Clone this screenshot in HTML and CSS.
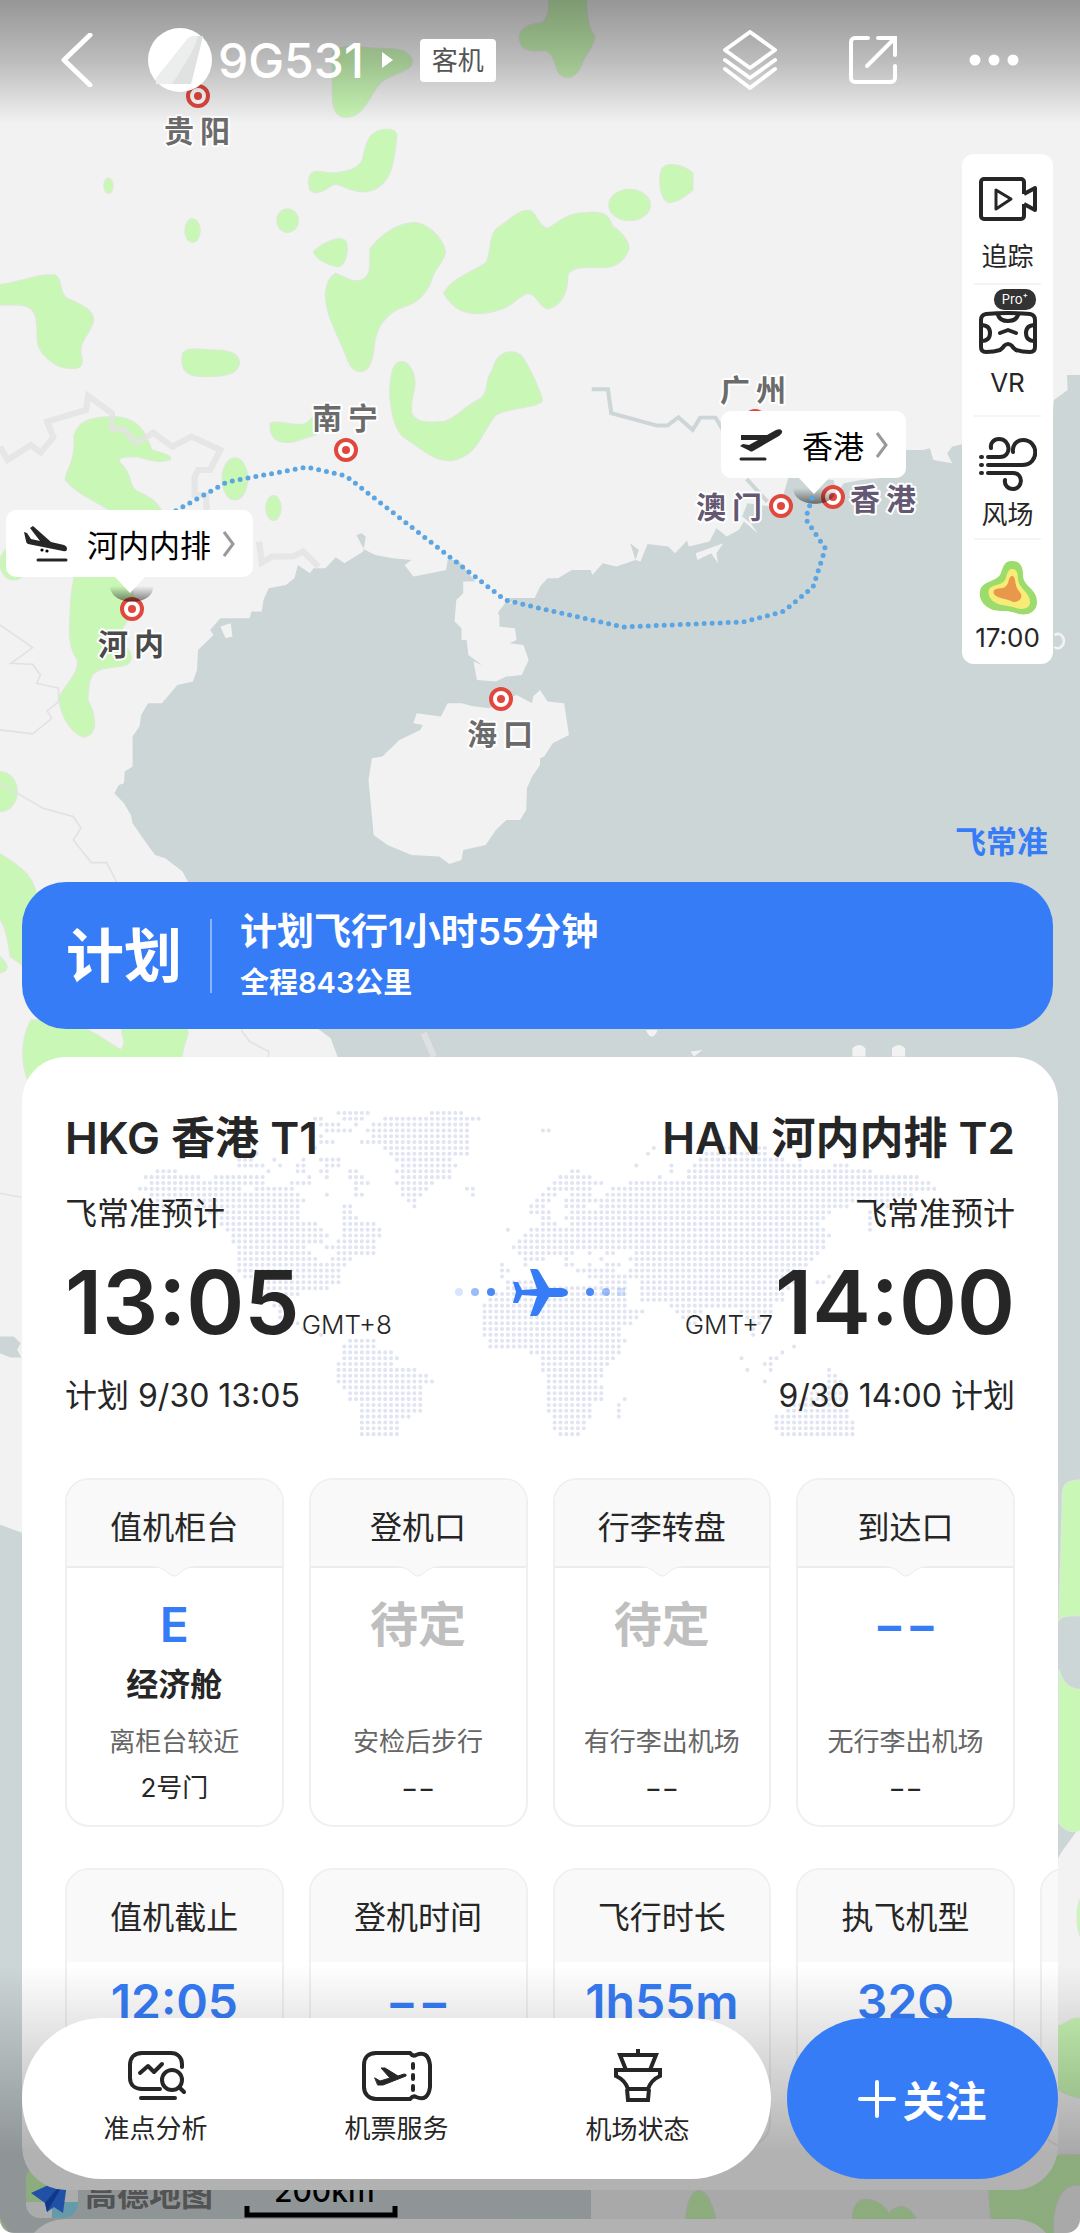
FILE: index.html
```html
<!DOCTYPE html>
<html lang="zh-CN">

<head>
  <meta charset="UTF-8">
  <meta name="viewport" content="width=device-width, initial-scale=1.0">
  <title>9G531 航班动态</title>
  <link rel="stylesheet" href="styles.css">
</head>

<body>
  <div class="screen">

    <!-- Map background -->
    <svg class="map" viewBox="0 0 1080 2233" preserveAspectRatio="xMinYMin slice" aria-hidden="true">
      <defs>
        <g id="city">
          <circle r="10" fill="#fff" stroke="#e0483e" stroke-width="4" />
          <circle r="4" fill="#e0483e" />
        </g>
        <linearGradient id="shade" x2="0" y2="1">
          <stop offset="0" stop-color="#000" stop-opacity="0" />
          <stop offset="1" stop-color="#000" stop-opacity=".5" />
        </linearGradient>
      </defs>
      <rect class="land" width="1080" height="2233" />
      <g transform="scale(.3444 .3333)">
        <!-- sea -->
        <path class="sea" d="M3136 1125L3098 1125L3100 1170L3060 1200L3050 1333L2793 1333L2765 1340L2750 1360L2765 1390L2710 1380L2700 1345L2680 1350L2630 1350L2600 1430L2500 1440L2450 1450L2430 1480L2420 1440L2290 1430L2270 1500L2240 1520L2170 1510L2155 1550L2180 1570L2200 1600L2160 1565L2145 1590L2110 1610L2080 1585L2060 1625L2000 1640L1995 1622L1960 1660L1940 1640L1880 1632L1860 1685L1845 1680L1855 1650L1830 1630L1845 1680L1790 1700L1750 1690L1720 1725L1715 1710L1660 1710L1620 1735L1590 1735L1568 1760L1550 1800L1510 1795L1450 1830L1450 1880L1495 1885L1500 1920L1480 1930L1520 1935L1535 1980L1515 2025L1470 2030L1440 2045L1385 2040L1375 1985L1400 1995L1360 1965L1355 1920L1340 1920L1340 1885L1320 1865L1325 1800L1345 1780L1345 1745L1380 1745L1330 1680L1300 1680L1295 1710L1250 1720L1200 1730L1175 1695L1195 1680L1140 1675L1090 1665L1060 1650L1050 1635L1035 1605L1050 1600L1062 1610L1055 1655L1000 1690L975 1672L945 1705L910 1705L900 1720L865 1695L855 1735L830 1755L780 1765L765 1800L760 1835L730 1835L725 1855L640 1855L610 1890L620 1905L575 1950L572 2010L560 2045L515 2055L470 2110L430 2110L410 2145L405 2180L385 2210L385 2300L362 2315L360 2350L345 2355L332 2380L360 2410L380 2445L385 2470L415 2515L450 2565L480 2575L530 2615L546 2646L928 3090L960 3115L980 3170V4600L120 4620L40 4590L0 4575V6699H1716V6560L1716 5600L3060 5600L3080 5560L3136 5480Z" />
        <path class="sea" d="M0 4010H40L60 4030L50 4050L62 4073H30L0 4060Z" />
        <!-- islands -->
        <path class="land" d="M1210 2140L1280 2150L1300 2110L1340 2110L1370 2118L1420 2125L1500 2085L1545 2110L1548 2090L1568 2070L1590 2105L1638 2110L1652 2205L1605 2230L1580 2270L1568 2275V2295L1545 2330L1530 2365L1528 2430L1510 2460L1470 2460L1440 2490L1410 2535L1345 2550L1340 2580L1305 2592L1275 2570L1195 2565L1125 2535L1085 2505L1070 2340L1080 2275L1110 2270L1160 2220L1220 2190L1228 2175L1200 2170Z" />
        <path class="land" d="M640 1880l30-10 5 40-20 5zM2020 1660l80-30-20 30 5 30-20-30-40 20zM1875 3090q18 40 35 0zM2475 3170v-25q20-20 38 0v25zM2590 3170v-25q20-20 38 0v25zM2005 3155l35-5-25 20z" />
        <path class="atoll" d="M3062 1905c20-10 30 10 26 25s-20 20-26 10" />
        <!-- woods -->
        <g class="woods">
          <path d="M965 160C1000 120 1060 150 1120 145C1200 145 1210 190 1185 205C1150 225 1110 235 1095 260C1070 300 1050 350 1010 352C960 355 965 300 965 250Z" />
          <path d="M1075 410C1100 380 1155 380 1152 410C1145 480 1140 560 1065 575C1020 580 990 550 970 552C950 565 920 590 900 570C890 530 900 510 930 515C970 525 1040 515 1052 480C1060 450 1060 430 1075 410Z" />
          <ellipse cx="315" cy="557" rx="13" ry="23" />
          <ellipse cx="559" cy="692" rx="22" ry="35" />
          <ellipse cx="835" cy="662" rx="31" ry="35" />
          <path d="M910 755C930 735 985 700 1005 725C1015 755 1000 795 985 800C960 800 920 780 910 755Z" />
          <path d="M975 820C1000 830 1020 850 1050 840C1085 825 1070 780 1075 745C1110 700 1160 665 1210 668C1260 680 1290 730 1293 755C1290 790 1260 800 1250 850C1230 890 1210 910 1160 925C1110 950 1090 990 1085 1050C1080 1090 1070 1115 1045 1115C1010 1110 1010 1070 985 1020C960 960 945 930 945 880C948 850 955 830 975 820Z" />
          <path d="M1288 880C1310 840 1350 825 1410 790C1430 760 1415 700 1450 680C1490 650 1520 620 1545 635C1560 650 1570 685 1590 685C1620 670 1640 640 1700 638C1770 630 1770 660 1780 680C1810 700 1830 730 1825 750C1810 790 1780 805 1740 803C1700 800 1650 800 1648 830C1650 880 1625 920 1590 927C1560 915 1560 880 1530 880C1500 890 1490 930 1400 940C1350 945 1320 930 1288 880Z" />
          <path d="M-10 855C60 850 100 820 160 825C185 840 170 880 195 895C240 915 270 930 272 960C265 1000 230 1020 235 1060C245 1100 235 1107 200 1105C160 1105 110 1060 108 1020C108 960 110 920 60 915L-10 915Z" />
          <path d="M530 1060C545 1040 570 1048 620 1050C680 1050 695 1070 695 1090C690 1120 660 1130 600 1130C550 1130 520 1120 530 1060Z" />
          <path d="M1140 1110C1150 1075 1185 1075 1200 1120C1215 1170 1190 1180 1195 1240C1210 1270 1240 1268 1290 1265C1330 1250 1350 1220 1380 1205C1430 1180 1400 1150 1430 1110C1445 1045 1500 1045 1520 1075C1550 1130 1560 1150 1575 1200C1570 1225 1480 1220 1440 1245C1400 1290 1390 1370 1310 1382C1260 1385 1230 1350 1170 1310C1140 1280 1120 1180 1140 1110Z" />
          <ellipse cx="1828" cy="615" rx="60" ry="47" />
          <path d="M1920 510C1930 485 1980 490 2012 520V570C1990 590 1960 610 1940 607C1915 595 1912 540 1920 510Z" />
          <path d="M1508 110C1515 75 1545 72 1575 68C1600 40 1590 20 1595 -10L1702 -10C1705 40 1705 80 1728 110C1720 150 1700 160 1690 190C1675 235 1640 245 1620 215C1605 170 1600 150 1575 152C1530 155 1510 150 1508 110Z" />
          <path d="M215 1310C225 1260 270 1250 330 1250C400 1250 425 1300 440 1350C470 1360 500 1365 495 1378C470 1390 440 1385 400 1370C370 1370 335 1370 350 1390C390 1430 370 1460 400 1475C440 1490 470 1520 480 1560L350 1560C310 1510 240 1500 190 1440C190 1410 220 1390 215 1310Z" />
          <ellipse cx="682" cy="1437" rx="37" ry="63" />
          <ellipse cx="794" cy="1524" rx="22" ry="37" />
          <path d="M785 1270C810 1255 850 1285 890 1270L920 1240C950 1270 930 1310 890 1312C840 1335 780 1340 785 1270Z" />
          <path d="M215 1730L380 1730C410 1850 340 1890 340 1920C400 1960 390 2000 340 2000C260 2010 260 2020 255 2100C275 2140 290 2200 245 2212C200 2200 170 2130 172 2090C200 2040 230 2020 225 1980C190 1930 205 1860 205 1800Z" />
          <ellipse cx="40" cy="1690" rx="40" ry="50" />
          <ellipse cx="0" cy="2375" rx="50" ry="60" />
          <path d="M-10 2555C60 2600 110 2630 110 2720C80 2780 60 2800 70 2900L30 2870C20 2800 10 2760 -10 2750ZM0 2870C30 2900 25 2910 0 2920ZM90 3060H200C260 3090 290 3110 350 3150C380 3120 330 3090 370 3080L540 3080C560 3110 520 3130 530 3200L80 3240C60 3180 60 3120 90 3060Z" />
          <path d="M3150 4440C3100 4440 3080 4450 3085 4500L3075 4860C3090 4840 3150 4850 3150 4850ZM3075 5010C3090 5060 3110 5070 3150 5070V5480C3120 5510 3090 5490 3075 5470Z" />
          <path d="M3150 5680C3120 5700 3120 5800 3150 5830ZM3060 6080C3100 6080 3110 6040 3150 6060V6300C3100 6280 3060 6290 3060 6220ZM2870 6560C2900 6480 3100 6450 3150 6470V6560C3090 6540 3050 6600 3060 6710H2880ZM1990 6670C1995 6540 2060 6540 2080 6670ZM2475 6670C2470 6560 2560 6600 2580 6640C2620 6600 2650 6630 2665 6670ZM-10 6640L30 6710H-10Z" />
        </g>
        <!-- roads and borders -->
        <path class="border" d="M0 1340L22 1380L90 1335L118 1358L155 1312L137 1265L250 1230L256 1188L325 1240V1288H360L395 1330L445 1298L500 1340L556 1310L640 1350L610 1410H575L565 1430V1485H598L600 1530M752 1625L760 1688L790 1670H850L880 1655L925 1700M1230 3100L1260 3170" />
        <path class="road" d="M0 1875L95 1943L32 1990L95 1993L117 2025L107 2050L170 2065V2105L137 2133L150 2155L95 2202L0 2190M0 2350L125 2425L213 2450L235 2485L213 2520L265 2588H310L340 2650M700 3090L725 3125L780 3155V3180M0 3580L62 3592" />
        <path class="river" d="M1718 1168H1765L1775 1240L1908 1277H1938L1970 1252L2011 1290L2033 1253H2078L2110 1310M2168 1437L2228 1505M1560 1800L1480 1800L1450 1845" />
      </g>

      <!-- cities -->
      <use href="#city" x="198" y="96" />
      <use href="#city" x="346" y="450" />
      <use href="#city" x="132" y="609" />
      <use href="#city" x="501" y="699" />
      <use href="#city" x="755" y="421" />
      <use href="#city" x="781" y="506" />
      <use href="#city" x="833" y="497" />
      <g class="city-name">
        <text x="164" y="142">贵阳</text>
        <text x="312" y="429">南宁</text>
        <text x="98" y="655" class="dark">河内</text>
        <text x="467" y="745">海口</text>
        <text x="720" y="401">广州</text>
        <text x="696" y="518" class="purple">澳门</text>
        <text x="850" y="510" class="purple">香港</text>
      </g>

      <!-- planned track -->
      <path d="M110 586h43c2 20-42 22-43 0z" fill="url(#shade)" />
      <path d="M793 488h43c2 20-42 22-43 0z" fill="url(#shade)" />
      <path class="track" d="M812 498L807 514V521L825 548L823 556L813 587L789 607L782 612L743 622L623 627L543 609L505 600L346 476L307 467L227 482L140 531" />

      <!-- map provider and scale -->
      <g>
        <rect x="26" y="2166" width="52" height="52" rx="14" fill="#f4f6f6" />
        <path d="M26 2202V2180a14 14 0 0 1 14-14h12v36z" fill="#c9f7b5" />
        <path d="M52 2202h26v2a14 14 0 0 1-14 14H52z" fill="#8fdcf2" />
        <path d="M31 2193l37-17-5 37-9-6-7 5-2-9z" fill="#2f74ee" />
        <path d="M68 2176l-21 36-2-9z" fill="#174fc4" />
      </g>
      <text class="provider" x="85" y="2206">高德地图</text>
      <text class="scale-text" x="274" y="2202">200km</text>
      <path d="M247 2206v9h148v-9" fill="none" stroke="#000" stroke-width="5" />
    </svg>

    <!-- Top bar -->
    <header class="topbar">
      <button class="icon-btn back" type="button" aria-label="返回">
        <svg width="32" height="54" viewBox="0 0 32 54"><path d="M29 2L3 27l26 25" fill="none" stroke="#fff" stroke-width="5" stroke-linecap="round" stroke-linejoin="round" /></svg>
      </button>
      <svg class="airline" width="64" height="64" viewBox="0 0 64 64" aria-hidden="true">
        <circle cx="32" cy="32" r="32" fill="#fff" />
        <path d="M8 50L40 10q2-2 6-2h9L43 56H8z" fill="#eceeee" />
        <path d="M24 56C34 40 46 24 50 8h5L43 56z" fill="#e0e1e1" />
      </svg>
      <h1 class="flight-no">9G531</h1>
      <svg class="caret" width="12" height="16" viewBox="0 0 12 16" aria-hidden="true"><path d="M0 0l11 8L0 16z" fill="#fff" /></svg>
      <span class="tag">客机</span>
      <div class="actions">
        <button class="icon-btn" type="button" aria-label="图层">
          <svg width="54" height="60" viewBox="0 0 54 60" fill="none" stroke="#fff" stroke-width="4" stroke-linejoin="round" stroke-linecap="round"><path d="M27 2L52 20 27 38 2 20zM2 30l25 18 25-18M2 39l25 19 25-19" /></svg>
        </button>
        <button class="icon-btn" type="button" aria-label="分享">
          <svg width="48" height="48" viewBox="0 0 48 48" fill="none" stroke="#fff" stroke-width="4" stroke-linecap="round"><path d="M19 2H6a4 4 0 0 0-4 4v36a4 4 0 0 0 4 4h36a4 4 0 0 0 4-4V30M29 2h17v17M45 3L18 30" /></svg>
        </button>
        <button class="icon-btn" type="button" aria-label="更多">
          <svg width="50" height="12" viewBox="0 0 50 12" fill="#fff"><circle cx="6" cy="6" r="5.5" /><circle cx="25" cy="6" r="5.5" /><circle cx="44" cy="6" r="5.5" /></svg>
        </button>
      </div>
    </header>

    <!-- Map controls -->
    <section class="map-area">
      <nav class="tools">
        <button class="tool tool-track" type="button">
          <svg width="58" height="44" viewBox="0 0 58 44" fill="none" stroke="#262626" stroke-width="4" stroke-linejoin="round"><path d="M45 17V5a3 3 0 0 0-3-3H5a3 3 0 0 0-3 3v34a3 3 0 0 0 3 3h37a3 3 0 0 0 3-3V27M45 17l11-6v22l-11-6" /><path d="M17 13v19l15-10z" stroke-width="3" /></svg>
          <span>追踪</span>
        </button>
        <button class="tool tool-vr" type="button">
          <span class="pro">Pro⁺</span>
          <svg width="60" height="44" viewBox="0 0 60 44" fill="none" stroke="#262626" stroke-width="4" stroke-linecap="round" stroke-linejoin="round"><path d="M8 3q22-2 44 0 5 1 5 6v27q0 5-5 5-8 0-14-2-3-2-4-4-4-4-8 0-1 2-4 4-6 2-14 2-5 0-5-5V9q0-5 5-6z" /><path d="M20 4q2 6 10 6t10-6M3 14q9 0 9 8t-9 8M57 14q-9 0-9 8t9 8M22 22l8-3 8 3" /></svg>
          <span>VR</span>
        </button>
        <button class="tool tool-wind" type="button">
          <svg width="58" height="54" viewBox="0 0 58 54" fill="none" stroke="#262626" stroke-width="4" stroke-linecap="round"><path d="M9 20h12c12 0 11-18-1-18-5 0-9 4-8 9M9 28h34c18 0 17-25 1-25-7 0-11 6-10 12M9 36h25c11 0 10 16 0 16-5 0-9-4-8-9" /><path d="M2 20h1M2 28h1M2 36h1" /></svg>
          <span>风场</span>
        </button>
        <button class="tool tool-radar" type="button">
          <svg width="58" height="56" viewBox="0 0 58 56"><path d="M33 1c9 0 11 7 11 14 0 12 14 13 14 27 0 10-9 14-18 12-6-2-10-3-18-3C9 51-1 42 1 31c2-10 15-9 20-16 3-6 3-14 12-14z" fill="#9bdc6c" /><path d="M33 9c5 0 6 5 6 10 0 9 13 14 12 24-1 6-8 7-14 5-8-3-14-2-20-5-8-4-9-12-6-15 4-4 11-2 15-8 2-4 2-11 7-11z" fill="#f6ec77" /><path d="M33 16c3 0 3 5 4 9 1 6 7 8 5 13-2 4-7 5-10 3-5-2-8-2-13-4s-6-6-2-8c4-1 8 0 11-4 2-3 2-9 5-9z" fill="#e8974b" /></svg>
          <span>17:00</span>
        </button>
      </nav>
      <strong class="brand">飞常准</strong>
      <button class="callout callout-hkg" type="button">
        <svg width="44" height="32" viewBox="0 0 44 32"><path d="M2 6h8l18 0 9-5q5-2 6 1 1 2-3 5L14 22q-2 1-3 0L1 17l3-2 6 1 9-5H2z" fill="#262626" /><path d="M2 30h24" stroke="#262626" stroke-width="3" stroke-linecap="round" /></svg>
        <span>香港</span>
        <svg width="12" height="26" viewBox="0 0 12 26" fill="none" stroke="#999" stroke-width="3"><path d="M1 1l9 12-9 12" /></svg>
      </button>
      <button class="callout callout-han" type="button">
        <svg width="44" height="36" viewBox="0 0 44 36"><path d="M0 6l3 1 4 6 9 2L6 2l3-2 18 16 13 3q3 1 3 4t-4 2L4 18Q2 17 2 15z" fill="#262626" /><path d="M14 34h28" stroke="#262626" stroke-width="3" stroke-linecap="round" /><circle cx="18" cy="24" r="1.6" /><circle cx="23" cy="25" r="1.6" /></svg>
        <span>河内内排</span>
        <svg width="12" height="26" viewBox="0 0 12 26" fill="none" stroke="#999" stroke-width="3"><path d="M1 1l9 12-9 12" /></svg>
      </button>
    </section>

    <!-- Flight status -->
    <section class="status">
      <strong class="status-name">计划</strong>
      <div class="status-info">
        <p class="status-time">计划飞行1小时55分钟</p>
        <p class="status-distance">全程843公里</p>
      </div>
    </section>

    <main class="card">
      <section class="route">
        <svg class="world" viewBox="-.5 -.5 138 56" aria-hidden="true">
          <path d="M34 0h6M48 0h0M50 0h6M30 1h2M35 1h4M42 1h17M28 2h0M31 2h4M37 2h1M40 2h17M88 2h0M32 3h5M39 3h18M69 3h2M74 3h0M31 4h1M40 4h17M71 4h0M73 4h0M28 5h0M31 5h3M38 5h19M71 5h0M21 6h0M23 6h0M30 6h1M42 6h15M88 6h1M99 6h3M106 6h2M118 6h0M20 7h1M43 7h14M72 7h0M87 7h1M97 7h11M17 8h3M23 8h1M26 8h0M28 8h1M31 8h4M44 8h10M86 8h0M92 8h0M96 8h15M113 8h1M17 9h5M24 9h1M27 9h2M32 9h3M45 9h10M85 9h1M91 9h1M95 9h19M119 9h3M3 10h4M22 10h1M27 10h2M31 10h2M36 10h2M44 10h10M74 10h2M91 10h1M94 10h32M1 11h10M13 11h9M24 11h0M27 11h0M29 11h1M32 11h1M36 11h3M45 11h9M72 11h6M89 11h1M92 11h0M94 11h40M2 12h20M24 12h0M26 12h4M32 12h0M37 12h3M44 12h7M71 12h9M82 12h0M84 12h52M0 13h18M20 13h7M29 13h0M31 13h0M37 13h1M40 13h0M45 13h5M56 13h2M70 13h8M81 13h56M2 14h26M30 14h0M32 14h1M37 14h2M45 14h4M57 14h1M69 14h3M74 14h4M80 14h53M3 15h26M38 15h0M46 15h2M68 15h3M73 15h56M3 16h3M10 16h18M35 16h2M47 16h1M67 16h3M73 16h4M79 16h43M126 16h3M12 17h16M35 17h2M40 17h0M67 17h4M74 17h45M125 17h2M14 18h14M35 18h3M40 18h0M63 18h0M69 18h2M73 18h45M125 18h1M14 19h17M35 19h6M63 19h0M69 19h3M74 19h43M125 19h1M15 20h17M35 20h7M61 20h0M63 20h1M67 20h51M125 20h1M16 21h17M35 21h7M61 21h0M66 21h53M16 22h16M34 22h7M43 22h0M65 22h53M120 22h0M17 23h12M32 23h9M43 23h0M64 23h54M17 24h13M34 24h7M65 24h10M77 24h1M80 24h2M85 24h32M17 25h14M33 25h4M66 25h4M73 25h1M76 25h0M79 25h1M84 25h32M120 25h0M17 26h19M62 26h1M66 26h1M70 26h0M73 26h2M77 26h1M80 26h3M85 26h30M17 27h18M62 27h2M71 27h0M75 27h7M84 27h30M119 27h0M18 28h17M62 28h1M73 28h0M77 28h37M118 28h1M20 29h15M63 29h5M79 29h5M86 29h27M116 29h2M21 30h12M63 30h21M86 30h26M21 31h7M33 31h0M61 31h23M86 31h25M23 32h3M33 32h0M60 32h24M86 32h25M23 33h3M59 33h25M91 33h18M24 34h2M59 34h28M92 34h5M103 34h6M24 35h3M59 35h27M93 35h3M104 35h4M26 36h2M59 36h26M94 36h2M105 36h2M111 36h0M28 37h1M59 37h24M94 37h1M105 37h1M31 38h1M59 38h24M95 38h0M105 38h1M32 39h0M36 39h5M60 39h24M95 39h0M103 39h0M35 40h6M60 40h23M96 40h0M103 40h0M112 40h1M35 41h9M62 41h0M64 41h0M67 41h16M102 41h0M104 41h0M110 41h1M35 42h10M69 42h13M103 42h1M108 42h2M34 43h10M69 43h12M104 43h0M107 43h2M111 43h0M114 43h0M34 44h14M69 44h11M104 44h1M108 44h1M111 44h0M116 44h0M118 44h1M34 45h16M70 45h10M105 45h0M111 45h0M118 45h2M34 46h17M70 46h9M107 46h1M118 46h3M35 47h14M70 47h10M117 47h4M36 48h13M70 48h10M115 48h7M36 49h13M70 49h10M83 49h1M114 49h8M38 50h11M70 50h8M82 50h1M112 50h9M38 51h11M70 51h8M82 51h1M111 51h11M38 52h9M71 52h7M82 52h1M109 52h13M38 53h7M71 53h6M82 53h0M109 53h14M38 54h7M71 54h6M109 54h14M38 55h7M72 55h4M110 55h13" />
        </svg>
        <div class="airport">
          <h2>HKG 香港 T1</h2>
          <p class="source">飞常准预计</p>
          <p class="clock"><time>13:05</time><small>GMT+8</small></p>
          <p class="plan">计划 9/30 13:05</p>
        </div>
        <svg class="plane" width="170" height="50" viewBox="0 0 170 50" aria-hidden="true">
          <g fill="#367cf6">
            <circle cx="4" cy="25" r="4" opacity=".2" />
            <circle cx="20" cy="25" r="4" opacity=".5" />
            <circle cx="36" cy="25" r="4" opacity=".9" />
            <path d="M58 15h5l4 8 15-1-7-20h6q2 0 3 2l10 17h13q6 1 6 4.500t-6 4.500H94L84 47q-1 2-3 2h-6l7-20-15-1-4 8h-5l3-11z" />
            <circle cx="135" cy="25" r="4" opacity=".9" />
            <circle cx="151" cy="25" r="4" opacity=".5" />
            <rect x="162" y="21" width="8" height="8" opacity=".2" />
          </g>
        </svg>
        <div class="airport arrive">
          <h2>HAN 河内内排 T2</h2>
          <p class="source">飞常准预计</p>
          <p class="clock"><small>GMT+7</small><time>14:00</time></p>
          <p class="plan">9/30 14:00 计划</p>
        </div>
      </section>

      <section class="tiles">
        <article class="tile">
          <h3>值机柜台</h3>
          <svg class="notch" width="40" height="12" viewBox="0 0 40 12"><path d="M0 0v1c12 0 14 9 20 9s8-9 20-9V0z" fill="#f9f9f9" /><path d="M0 1c12 0 14 9 20 9s8-9 20-9" fill="none" stroke="#ececec" /></svg>
          <p class="value">E</p>
          <p class="cabin">经济舱</p>
          <p class="hint">离柜台较近</p>
          <p class="detail">2号门</p>
        </article>
        <article class="tile">
          <h3>登机口</h3>
          <svg class="notch" width="40" height="12" viewBox="0 0 40 12"><path d="M0 0v1c12 0 14 9 20 9s8-9 20-9V0z" fill="#f9f9f9" /><path d="M0 1c12 0 14 9 20 9s8-9 20-9" fill="none" stroke="#ececec" /></svg>
          <p class="value pending">待定</p>
          <p class="cabin"></p>
          <p class="hint">安检后步行</p>
          <p class="detail">−−</p>
        </article>
        <article class="tile">
          <h3>行李转盘</h3>
          <svg class="notch" width="40" height="12" viewBox="0 0 40 12"><path d="M0 0v1c12 0 14 9 20 9s8-9 20-9V0z" fill="#f9f9f9" /><path d="M0 1c12 0 14 9 20 9s8-9 20-9" fill="none" stroke="#ececec" /></svg>
          <p class="value pending">待定</p>
          <p class="cabin"></p>
          <p class="hint">有行李出机场</p>
          <p class="detail">−−</p>
        </article>
        <article class="tile">
          <h3>到达口</h3>
          <svg class="notch" width="40" height="12" viewBox="0 0 40 12"><path d="M0 0v1c12 0 14 9 20 9s8-9 20-9V0z" fill="#f9f9f9" /><path d="M0 1c12 0 14 9 20 9s8-9 20-9" fill="none" stroke="#ececec" /></svg>
          <p class="value">−−</p>
          <p class="cabin"></p>
          <p class="hint">无行李出机场</p>
          <p class="detail">−−</p>
        </article>
      </section>

      <section class="tiles facts">
        <article class="tile">
          <h3>值机截止</h3>
          <p class="value">12:05</p>
        </article>
        <article class="tile">
          <h3>登机时间</h3>
          <p class="value">−−</p>
        </article>
        <article class="tile">
          <h3>飞行时长</h3>
          <p class="value">1h55m</p>
        </article>
        <article class="tile">
          <h3>执飞机型</h3>
          <p class="value">32Q</p>
        </article>
        <article class="tile">
          <h3></h3>
        </article>
      </section>
    </main>

    <section class="card next-card"></section>

    <!-- Bottom bar -->
    <footer class="bottom">
      <nav class="tabs">
        <button class="tab" type="button">
          <svg width="60" height="52" viewBox="0 0 60 52" fill="none" stroke="#262626" stroke-width="4" stroke-linecap="round" stroke-linejoin="round"><path d="M56 17v-3C56 7 51 3 45 3H16C8 3 4 8 4 15v13c0 7 5 11 12 11h18M14 23l8-7 6 6 8-8M15 48h34" /><circle cx="46" cy="30" r="10" /><path d="M54 38l4 4" /></svg>
          <span>准点分析</span>
        </button>
        <button class="tab" type="button">
          <svg width="70" height="52" viewBox="0 0 70 52" fill="none" stroke="#262626" stroke-width="4" stroke-linecap="round"><path d="M48 3H14C6 3 2 8 2 15v22c0 7 5 12 12 12h34q3-4 6-2 12 5 14-10V15Q66 0 54 5q-3 2-6-2zM51 14v4M51 25v4M51 36v4" /><path d="M13 28l5 3 10-3-9-10 4 0 13 8 6-2q3 0 2 2l-23 9h-5z" fill="#262626" stroke-width="1" /></svg>
          <span>机票服务</span>
        </button>
        <button class="tab" type="button">
          <svg width="50" height="54" viewBox="0 0 50 54" fill="none" stroke="#262626" stroke-width="4"><path d="M25 0v5M7 6h36l-6 15H13zM3 21h44v6q-9 4-12 13H15Q12 31 3 27zM14 40l1 11h20l1-11" /></svg>
          <span>机场状态</span>
        </button>
      </nav>
      <button class="follow" type="button">
        <svg width="38" height="38" viewBox="0 0 38 38" stroke="#fff" stroke-width="4" stroke-linecap="round"><path d="M19 2v34M2 19h34" /></svg>
        <span>关注</span>
      </button>
    </footer>
  </div>
</body>

</html>
```
FILE: styles.css
```css
* {
  box-sizing: border-box;
  margin: 0;
  padding: 0;
}

body {
  font-family: Inter, "Noto Sans CJK SC", sans-serif;
  color: #262626;
  background-color: #fff;
}

button {
  font: inherit;
  color: inherit;
  background: none;
  border: none;
  cursor: pointer;
}

svg {
  display: block;
  flex: none;
}

.screen {
  position: relative;
  height: 100vh;
  overflow: hidden;
  border-radius: 0 0 14px 14px;
  background-color: #f2f2f2;
}

/* Map */

.map {
  position: absolute;
  inset: 0;
  width: 100%;
  height: 100%;
}

.land {
  fill: #f2f2f2;
}

.sea {
  fill: #cdd6d7;
}

.woods {
  fill: #c9f7b5;
  stroke: #d9ecd2;
  stroke-width: 4;
}

.border,
.road,
.river,
.atoll {
  fill: none;
  stroke: #e3e2e3;
  stroke-width: 18;
}

.border {
  opacity: 0.8;
}

.road {
  stroke-width: 5;
}

.river {
  stroke: #cdd6d7;
  stroke-width: 12;
}

.atoll {
  stroke: #f2f2f2;
  stroke-width: 8;
}

.city-name {
  font-size: 30px;
  font-weight: 700;
  letter-spacing: 6px;
  fill: #6b6b6b;
  stroke: #fff;
  stroke-width: 4;
  stroke-linejoin: round;
  paint-order: stroke;
}

.city-name .dark {
  fill: #4a4a4a;
}

.city-name .purple {
  fill: #655873;
}

.track {
  fill: none;
  stroke: #5aa5e2;
  stroke-width: 5;
  stroke-linecap: round;
  stroke-dasharray: 0 8;
}

.provider {
  font-size: 32px;
  font-weight: 700;
  fill: #777;
}

.scale-text {
  font-size: 30px;
  font-weight: 500;
}

/* Top bar */

.topbar {
  position: relative;
  display: flex;
  align-items: center;
  height: 124px;
  padding: 0 61px 4px;
  background: linear-gradient(rgba(0, 0, 0, 0.38), rgba(0, 0, 0, 0.22) 50%, rgba(0, 0, 0, 0));
}

.airline {
  margin-left: 55px;
}

.flight-no {
  margin-left: 6px;
  font-size: 48px;
  font-weight: 500;
  color: #fff;
}

.caret {
  margin-left: 18px;
}

.tag {
  margin-left: 26px;
  padding: 0 12px;
  border-radius: 4px;
  font-size: 26px;
  line-height: 43px;
  color: #555;
  background-color: #fff;
}

.actions {
  display: flex;
  align-items: center;
  gap: 72px;
  margin-left: auto;
}

/* Map controls */

.map-area {
  position: relative;
  display: flex;
  flex-direction: column;
  align-items: flex-end;
  justify-content: space-between;
  height: 758px;
  padding: 30px 27px 20px;
}

.tools {
  width: 91px;
  padding: 0 12px;
  border-radius: 12px;
  background-color: #fff;
}

.tool {
  display: flex;
  flex-direction: column;
  align-items: center;
  justify-content: flex-end;
  width: 100%;
  padding-bottom: 8px;
  font-size: 26px;
  line-height: 36px;
  white-space: nowrap;
  border-bottom: 2px solid #f3f3fa;
}

.tool-track {
  height: 131px;
  gap: 18px;
}

.tool-vr {
  height: 132px;
  gap: 10px;
  padding-bottom: 14px;
}

.tool-vr .pro {
  margin: 0 -15px -9px 0;
  padding: 0 8px;
  border-radius: 10px;
  font-size: 13px;
  line-height: 21px;
  color: #fff;
  background-color: #333;
}

.tool-wind {
  height: 123px;
  gap: 6px;
  padding-bottom: 5px;
}

.tool-radar {
  height: 124px;
  gap: 4px;
  border-bottom: none;
}

.brand {
  margin-right: 5px;
  font-size: 31px;
  line-height: 40px;
  color: #367cf6;
}

.callout {
  position: absolute;
  display: flex;
  align-items: center;
  height: 67px;
  padding: 0 18px;
  border-radius: 10px;
  font-size: 31px;
  color: #000;
  white-space: nowrap;
  background-color: #fff;
}

.callout::after {
  content: "";
  position: absolute;
  top: 100%;
  left: 50%;
  border: 15px solid transparent;
  border-top: 16px solid #fff;
  border-bottom: none;
  transform: translateX(-50%);
}

.callout span {
  margin: 0 12px 0 19px;
}

.callout-hkg {
  top: 287px;
  left: 721px;
}

.callout-han {
  top: 386px;
  left: 6px;
}

/* Flight status */

.status {
  position: relative;
  display: flex;
  align-items: center;
  height: 147px;
  margin: 0 27px 0 22px;
  padding: 0 44px;
  border-radius: 44px;
  color: #fff;
  background-color: #367cf6;
}

.status-name {
  font-size: 58px;
  line-height: 80px;
}

.status-info {
  display: flex;
  flex-direction: column;
  justify-content: space-between;
  height: 74px;
  margin-left: 28px;
  padding-left: 28px;
  border-left: 2px solid #8cb4fa;
}

.status-time {
  font-size: 37px;
  font-weight: 600;
  line-height: 26px;
}

.status-distance {
  font-size: 29px;
  font-weight: 600;
  line-height: 20px;
}

/* Flight card */

.card {
  position: relative;
  margin: 28px 22px 0;
  padding: 55px 43px 43px;
  border-radius: 44px;
  overflow: hidden;
  background-color: #fff;
}

.route {
  position: relative;
  display: flex;
  justify-content: space-between;
}

.world {
  position: absolute;
  top: -2px;
  left: 50%;
  width: 806px;
  transform: translateX(-50%);
}

.world path {
  fill: none;
  stroke: #e1e4f2;
  stroke-width: 0.7;
  stroke-linecap: round;
  stroke-dasharray: 0 1;
}

.airport {
  position: relative;
  flex: 1;
  white-space: nowrap;
}

.airport h2 {
  font-size: 44px;
  font-weight: 600;
  line-height: 52px;
}

.source {
  margin-top: 30px;
  font-size: 32px;
  line-height: 40px;
}

.clock {
  display: flex;
  align-items: baseline;
  gap: 2px;
  margin-top: 20px;
  font-size: 88px;
  font-weight: 600;
  line-height: 96px;
}

.clock small {
  font-size: 26px;
  font-weight: 300;
  line-height: 30px;
}

.plan {
  margin-top: 26px;
  font-size: 32px;
  line-height: 40px;
}

.arrive {
  text-align: right;
}

.arrive .clock {
  justify-content: flex-end;
}

.plane {
  position: relative;
  align-self: center;
  margin-top: 56px;
}

/* Tiles */

.tiles {
  display: grid;
  grid-auto-flow: column;
  grid-auto-columns: calc((100% - 75px) / 4);
  gap: 25px;
  margin-top: 62px;
}

.tile {
  height: 349px;
  border: 2px solid #f0f0f0;
  border-radius: 24px;
  text-align: center;
  overflow: hidden;
}

.tile h3 {
  height: 88px;
  padding-top: 10px;
  border-bottom: 2px solid #ececec;
  font-size: 32px;
  font-weight: 400;
  line-height: 76px;
  background-color: #f9f9f9;
}

.notch {
  margin: -2px auto -10px;
}

.value {
  margin-top: 29px;
  font-size: 48px;
  font-weight: 600;
  line-height: 56px;
  color: #367cf6;
}

.value.pending {
  color: #bfbfbf;
}

.cabin {
  height: 40px;
  margin-top: 12px;
  font-size: 32px;
  font-weight: 700;
  line-height: 40px;
}

.hint {
  margin-top: 18px;
  font-size: 26px;
  line-height: 38px;
  color: #666;
}

.detail {
  margin-top: 8px;
  font-size: 26px;
  line-height: 38px;
}

.facts {
  margin-top: 41px;
}

.facts .tile {
  height: 279px;
}

.facts h3 {
  height: 92px;
  border-bottom: none;
}

.facts .value {
  margin-top: 12px;
}

.next-card {
  min-height: 80px;
  margin-top: 29px;
}

/* Bottom bar */

.bottom {
  position: absolute;
  right: 0;
  bottom: 0;
  left: 0;
  display: flex;
  gap: 16px;
  padding: 53px 22px 54px;
  background: linear-gradient(rgba(0, 0, 0, 0), rgba(0, 0, 0, 0.3) 70%);
}

.tabs {
  display: flex;
  flex: 1;
  height: 161px;
  padding: 0 13px;
  border-radius: 81px;
  background-color: #fff;
}

.tab {
  display: flex;
  flex: 1;
  flex-direction: column;
  align-items: center;
  justify-content: center;
  gap: 8px;
  font-size: 26px;
  line-height: 38px;
}

.follow {
  display: flex;
  align-items: center;
  justify-content: center;
  gap: 6px;
  width: 271px;
  height: 161px;
  border-radius: 81px;
  font-size: 42px;
  font-weight: 600;
  color: #fff;
  background-color: #367cf6;
}
```
